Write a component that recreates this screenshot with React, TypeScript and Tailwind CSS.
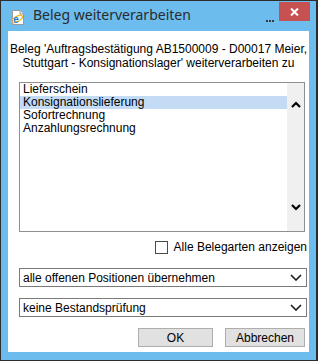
import React from "react";

function Chevron({ up = false, className = "" }: { up?: boolean; className?: string }) {
  return (
    <svg width="10" height="7" viewBox="0 0 10 7" className={className}>
      {up ? (
        <polyline points="1,6 5,2 9,6" fill="none" stroke="#000" strokeWidth="2.2" />
      ) : (
        <polyline points="1,1 5,5 9,1" fill="none" stroke="#000" strokeWidth="2.2" />
      )}
    </svg>
  );
}

function DropChevron() {
  return (
    <svg width="12" height="7" viewBox="0 0 12 7">
      <polyline points="1,1 6,6 11,1" fill="none" stroke="#1a1a1a" strokeWidth="1.6" />
    </svg>
  );
}

function IeIcon() {
  return (
    <svg width="14" height="15" viewBox="0 0 14 15">
      <path d="M1.5 0.5 H9 L12.5 4 V14.5 H1.5 Z" fill="#fff" stroke="#9a9a9a" strokeWidth="1" />
      <path d="M9 0.5 V4 H12.5" fill="#eee" stroke="#9a9a9a" strokeWidth="1" />
      <ellipse cx="6" cy="9" rx="6" ry="2.6" transform="rotate(-30 6 9)" fill="none" stroke="#f2b522" strokeWidth="1.3" />
      <text x="2.3" y="12.5" fontSize="10" fontWeight="bold" fill="#1e7bd6" fontFamily="Liberation Sans, Arial, sans-serif">e</text>
    </svg>
  );
}

export default function App() {
  const items = ["Lieferschein", "Konsignationslieferung", "Sofortrechnung", "Anzahlungsrechnung"];
  return (
    <div className="w-[318px] h-[361px] bg-[#6cbcee] border border-[#2d2d2d] border-r-2 flex flex-col font-['Liberation_Sans',Arial,sans-serif] text-black">
      {/* Title bar */}
      <div className="h-[30px] flex items-start shrink-0">
        <div className="ml-[10px] mt-[9px] w-[14px] h-[15px]">
          <IeIcon />
        </div>
        <span className="ml-[8px] mt-[4px] text-[14px] leading-[20px] text-[#2b2b2b] font-['Noto_Sans',sans-serif]">
          Beleg weiterverarbeiten
        </span>
        <div className="flex-1" />
        <div className="mt-[19px] flex gap-[1px]">
          <div className="w-[2px] h-[2px] bg-[#3a3a3a]" />
          <div className="w-[2px] h-[2px] bg-[#3a3a3a]" />
          <div className="w-[2px] h-[2px] bg-[#3a3a3a]" />
        </div>
        <div className="ml-[5px] mr-[6px] mt-[1px] w-[31px] h-[19px] bg-[#c75050] flex items-center justify-center">
          <svg width="9" height="8" viewBox="0 0 9 8">
            <path d="M1 0.5 L8 7.5 M8 0.5 L1 7.5" stroke="#fff" strokeWidth="2" />
          </svg>
        </div>
      </div>

      {/* Content */}
      <div className="mx-[7px] h-[321px] bg-white flex flex-col shrink-0">
        <div className="mt-[11px] text-[12px] leading-[14px] text-center">
          <div>Beleg 'Auftragsbestätigung AB1500009 - D00017 Meier,</div>
          <div>Stuttgart - Konsignationslager' weiterverarbeiten zu</div>
        </div>

        <div className="ml-[11px] mt-[12px] w-[286px] h-[150px] border border-[#8e8f8f] flex">
          <div className="flex-1 flex flex-col">
            {items.map((it, i) => (
              <div
                key={it}
                className={`h-[13px] leading-[13px] pl-[3px] text-[12px] ${i === 1 ? "bg-[#c4dbf6]" : ""}`}
              >
                {it}
              </div>
            ))}
          </div>
          <div className="w-[17px] bg-[#f0f0f0] flex flex-col items-center justify-between pt-[18px] pb-[20px]">
            <Chevron up />
            <Chevron />
          </div>
        </div>

        <div className="ml-[11px] mt-[9px] w-[288px] h-[13px] flex items-center justify-end">
          <div className="w-[13px] h-[13px] border border-[#4a4a4a] bg-white" />
          <span className="ml-[6px] text-[12px] leading-[13px]">Alle Belegarten anzeigen</span>
        </div>

        <div className="ml-[11px] mt-[14px] w-[288px] h-[19px] border border-[#7a7a7a] flex items-center justify-between pl-[3px] pr-[4px]">
          <span className="text-[12px] leading-[14px]">alle offenen Positionen übernehmen</span>
          <DropChevron />
        </div>

        <div className="ml-[11px] mt-[11px] w-[288px] h-[19px] border border-[#7a7a7a] flex items-center justify-between pl-[3px] pr-[4px]">
          <span className="text-[12px] leading-[14px]">keine Bestandsprüfung</span>
          <DropChevron />
        </div>

        <div className="ml-[11px] mt-[11px] w-[286px] flex justify-end gap-[12px]">
          <div className="w-[75px] h-[19px] bg-[#e1e1e1] border border-[#adadad] flex items-center justify-center text-[12px]">
            OK
          </div>
          <div className="w-[80px] h-[19px] bg-[#e1e1e1] border border-[#adadad] flex items-center justify-center text-[12px]">
            Abbrechen
          </div>
        </div>
      </div>
    </div>
  );
}
